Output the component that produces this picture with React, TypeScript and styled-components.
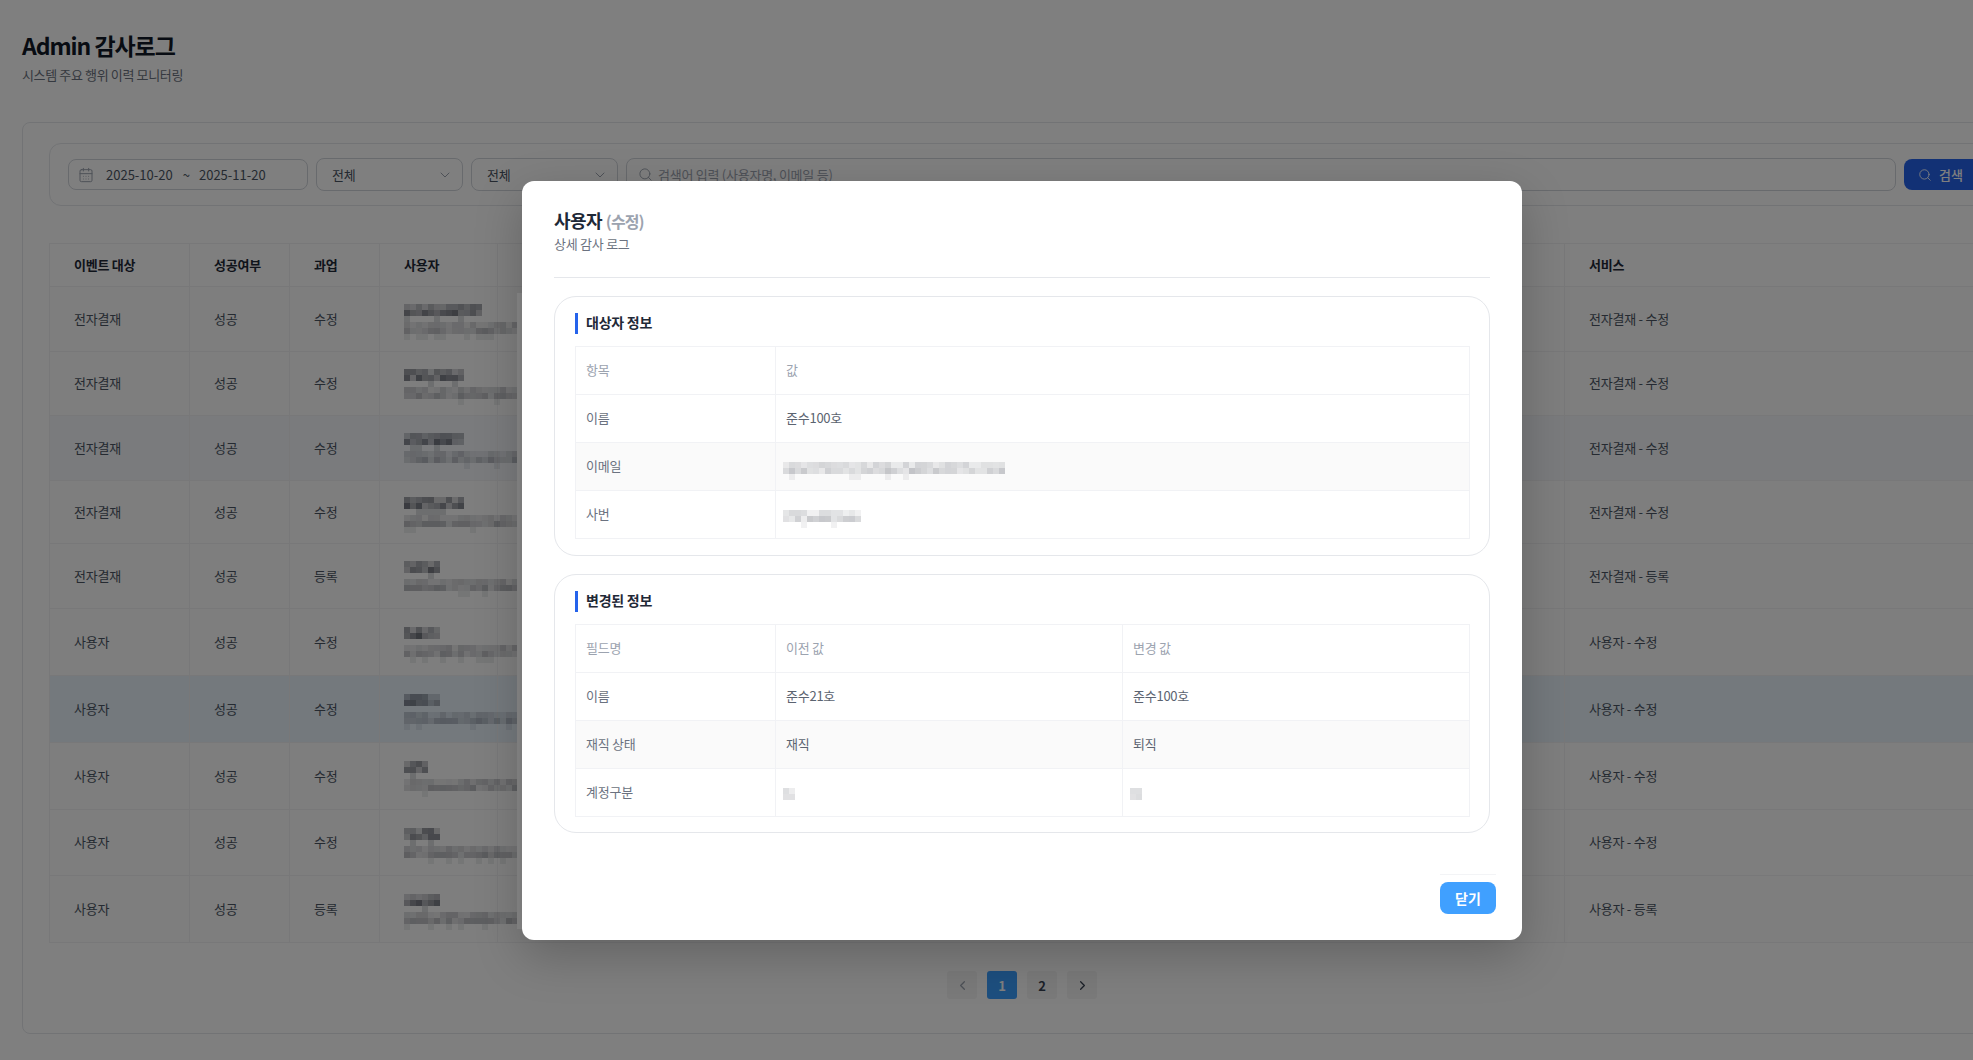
import styled, { createGlobalStyle } from 'styled-components';
import { CalendarDays, ChevronDown, ChevronLeft, ChevronRight, Search } from 'lucide-react';

const GlobalStyle = createGlobalStyle`
  html, body {
    margin: 0;
    padding: 0;
    background: #fff;
    overflow: hidden;
    font-family: "Noto Sans CJK KR", "Noto Sans", sans-serif;
    letter-spacing: -0.25px;
  }
  * { box-sizing: border-box; }
`;

const Page = styled.div`
  position: relative;
  width: 1973px;
  height: 1060px;
  overflow: hidden;
  padding: 0 0 0 22px;
  background: #fff;
`;

const PageHead = styled.header`
  height: 122px;
  padding-top: 29px;
`;

const PageTitle = styled.h1`
  margin: 0;
  font-size: 23px;
  line-height: 32px;
  font-weight: 700;
  letter-spacing: -1.05px;
  color: #111827;
`;

const PageSub = styled.p`
  margin: 4px 0 0;
  font-size: 13px;
  line-height: 20px;
  letter-spacing: -0.36px;
  color: #6b7280;
`;

const Panel = styled.section`
  width: 2100px;
  height: 912px;
  padding: 20px 26px;
  border: 1px solid #e5e7eb;
  border-radius: 8px;
`;

const FilterBar = styled.div`
  display: flex;
  align-items: center;
  gap: 8px;
  height: 63px;
  width: 2040px;
  padding: 0 18px;
  border: 1px solid #e5e7eb;
  border-radius: 12px;
`;

const DateField = styled.div`
  display: flex;
  align-items: center;
  width: 240px;
  height: 31px;
  padding-left: 9px;
  border: 1px solid #d1d5db;
  border-radius: 8px;
  font-size: 13px;
  letter-spacing: 0;
  color: #4b5563;
  svg { color: #9ca3af; margin-right: 12px; }
`;

const Tilde = styled.span`
  margin: 0 9px 0 10px;
`;

const SelectField = styled.div`
  display: flex;
  align-items: center;
  justify-content: space-between;
  width: ${p => p.$w}px;
  height: 33px;
  padding: 0 9px 0 15px;
  border: 1px solid #d1d5db;
  border-radius: 8px;
  font-size: 13px;
  color: #4b5563;
  svg { color: #9ca3af; }
`;

const SearchField = styled.div`
  display: flex;
  align-items: center;
  gap: 5px;
  width: 1270px;
  height: 33px;
  padding-left: 11px;
  border: 1px solid #d1d5db;
  border-radius: 8px;
  font-size: 13px;
  color: #9ca3af;
`;

const SearchButton = styled.button`
  display: flex;
  align-items: center;
  gap: 7px;
  width: 100px;
  height: 31px;
  padding: 0 0 0 14px;
  border: 0;
  border-radius: 8px;
  background: #2563eb;
  color: #fff;
  font: 500 13px "Noto Sans CJK KR", "Noto Sans", sans-serif;
`;

const LogTable = styled.table`
  width: 2040px;
  margin-top: 37px;
  border-collapse: collapse;
  table-layout: fixed;
  font-size: 13px;
  color: #4b5563;
  th, td {
    padding: 0 0 2px 24px;
    border: 1px solid #f0f0f2;
    text-align: left;
  }
  th {
    height: 43px;
    font-weight: 700;
    color: #1f2937;
  }
`;

const LogRow = styled.tr`
  height: ${p => p.$h}px;
  background: ${p => p.$bg};
`;

const UserCell = styled.div`
  display: flex;
  flex-direction: column;
  padding-top: 8px;
  svg { display: block; }
`;

const Pager = styled.nav`
  display: flex;
  justify-content: center;
  gap: 10px;
  width: 150px;
  margin: 28px 0 0 898px;
`;

const PageBtn = styled.button`
  display: flex;
  align-items: center;
  justify-content: center;
  flex: none;
  width: 30px;
  height: 28px;
  padding: 0;
  border: 0;
  border-radius: 3px;
  background: ${p => (p.$active ? '#3b9eff' : '#f5f5f5')};
  color: ${p => (p.$active ? '#fff' : p.$off ? '#9ca3af' : '#374151')};
  font: 600 13px "Noto Sans CJK KR", "Noto Sans", sans-serif;
`;

const Backdrop = styled.div`
  position: absolute;
  inset: 0;
  background: rgba(0, 0, 0, 0.5);
`;

const Strip = styled.div`
  position: absolute;
  left: 517px;
  top: 293px;
  width: 6px;
  height: 636px;
  background: #8a8a8a;
`;

const Modal = styled.div`
  position: absolute;
  left: 522px;
  top: 181px;
  width: 1000px;
  height: 759px;
  padding: 27px 32px 0;
  border-radius: 12px;
  background: #fff;
  box-shadow: 0 16px 48px rgba(0, 0, 0, 0.22);
`;

const ModalHead = styled.div`
  height: 70px;
  border-bottom: 1px solid #e5e7eb;
`;

const ModalTitle = styled.h2`
  margin: 0;
  font-size: 18px;
  line-height: 25px;
  font-weight: 700;
  letter-spacing: -0.5px;
  color: #1f2937;
`;

const ModalTitleNote = styled.span`
  font-size: 16px;
  font-weight: 600;
  letter-spacing: -0.9px;
  color: #9ca3af;
`;

const ModalSub = styled.p`
  margin: 0;
  font-size: 13px;
  line-height: 20px;
  color: #6b7280;
`;

const Card = styled.section`
  height: ${p => p.$h}px;
  margin-top: 18px;
  padding: 16px 20px;
  border: 1px solid #e5e7eb;
  border-radius: 22px;
`;

const CardTitle = styled.h3`
  margin: 0 0 12px;
  padding: 0 0 2px 8px;
  border-left: 3px solid #2563eb;
  font-size: 14px;
  line-height: 19px;
  font-weight: 700;
  color: #1f2937;
`;

const InfoTable = styled.table`
  width: 894px;
  border-collapse: collapse;
  table-layout: fixed;
  font-size: 13px;
  border: 1px solid #e8eaf0;
  td {
    height: 48px;
    padding: 0 0 2px 10px;
    border: 1px solid #f1f2f5;
  }
`;

const InfoRow = styled.tr`
  background: ${p => (p.$alt ? '#fafafa' : '#fff')};
  color: ${p => (p.$head ? '#9ca3af' : '#5b6370')};
`;

const Label = styled.td`
  color: ${p => (p.$head ? '#9ca3af' : '#6b7280')};
`;

const BlurCell = styled.div`
  margin-left: -3px;
  padding-top: 10px;
  svg { display: block; }
`;

const Footer = styled.div`
  display: flex;
  justify-content: flex-end;
  margin: 41px -6px 0 0;
`;

const CloseWrap = styled.div`
  width: 56px;
  padding-top: 7px;
  border-top: 1px solid #f3f4f6;
`;

const CloseButton = styled.button`
  display: block;
  width: 56px;
  height: 32px;
  padding: 0;
  border: 0;
  border-radius: 8px;
  background: #40a0ff;
  color: #fff;
  font: 700 14px "Noto Sans CJK KR", "Noto Sans", sans-serif;
`;

// 가려진 개인정보용 모자이크
const Mosaic = ({ cols, seed, min, max }: { cols: number; seed: number; min: number; max: number }) => {
  let s = seed * 7919 + 13;
  const rnd = () => {
    s = (s * 16807) % 2147483647;
    return (s % 1000) / 1000;
  };
  const cells: { x: number; y: number; a: number }[] = [];
  for (let y = 0; y < 3; y++) {
    for (let x = 0; x < cols; x++) {
      const r = rnd();
      if (y === 2) {
        if (r < 0.82) continue;
        cells.push({ x, y, a: min * 0.7 });
      } else {
        const shade = y === 0 ? 0.75 : 1;
        cells.push({ x, y, a: (min + (max - min) * rnd()) * shade });
      }
    }
  }
  return (
    <svg width={cols * 6} height={18} viewBox={`0 0 ${cols * 6} 18`}>
      {cells.map((c, i) => (
        <rect key={i} x={c.x * 6} y={c.y * 6} width={6} height={6} fill={`rgba(20,25,40,${c.a.toFixed(2)})`} />
      ))}
    </svg>
  );
};

const rows = [
  { target: '전자결재', job: '수정', h: 65, bg: '#fcfcfc', name: 13 },
  { target: '전자결재', job: '수정', h: 64, bg: '#fcfcfc', name: 10 },
  { target: '전자결재', job: '수정', h: 65, bg: '#f4f7fb', name: 10 },
  { target: '전자결재', job: '수정', h: 63, bg: '#fcfcfc', name: 10 },
  { target: '전자결재', job: '등록', h: 65, bg: '#fcfcfc', name: 6 },
  { target: '사용자', job: '수정', h: 67, bg: '#fcfcfc', name: 6 },
  { target: '사용자', job: '수정', h: 67, bg: '#e8f2fb', name: 6 },
  { target: '사용자', job: '수정', h: 67, bg: '#fcfcfc', name: 4 },
  { target: '사용자', job: '수정', h: 66, bg: '#fcfcfc', name: 6 },
  { target: '사용자', job: '등록', h: 67, bg: '#fcfcfc', name: 6 },
];

const App = () => {
  return (
    <Page>
      <GlobalStyle />
      <PageHead>
        <PageTitle>Admin 감사로그</PageTitle>
        <PageSub>시스템 주요 행위 이력 모니터링</PageSub>
      </PageHead>

      <Panel>
        <FilterBar>
          <DateField>
            <CalendarDays size={16} strokeWidth={1.5} />
            2025-10-20<Tilde>~</Tilde>2025-11-20
          </DateField>
          <SelectField $w={147}>
            전체
            <ChevronDown size={16} strokeWidth={1.5} />
          </SelectField>
          <SelectField $w={147}>
            전체
            <ChevronDown size={16} strokeWidth={1.5} />
          </SelectField>
          <SearchField>
            <Search size={15} strokeWidth={1.5} />
            검색어 입력 (사용자명, 이메일 등)
          </SearchField>
          <SearchButton>
            <Search size={14} strokeWidth={1.5} />
            검색
          </SearchButton>
        </FilterBar>

        <LogTable>
          <colgroup>
            <col width={140} />
            <col width={100} />
            <col width={90} />
            <col width={118} />
            <col width={1067} />
            <col width={525} />
          </colgroup>
          <thead>
            <tr>
              <th>이벤트 대상</th>
              <th>성공여부</th>
              <th>과업</th>
              <th>사용자</th>
              <th />
              <th>서비스</th>
            </tr>
          </thead>
          <tbody>
            {rows.map((r, i) => (
              <LogRow key={i} $h={r.h} $bg={r.bg}>
                <td>{r.target}</td>
                <td>성공</td>
                <td>{r.job}</td>
                <td>
                  <UserCell>
                    <Mosaic cols={r.name} seed={i + 3} min={0.2} max={0.6} />
                    <Mosaic cols={19} seed={i + 41} min={0.1} max={0.3} />
                  </UserCell>
                </td>
                <td />
                <td>
                  {r.target} - {r.job}
                </td>
              </LogRow>
            ))}
          </tbody>
        </LogTable>

        <Pager>
          <PageBtn $off>
            <ChevronLeft size={15} />
          </PageBtn>
          <PageBtn $active>1</PageBtn>
          <PageBtn>2</PageBtn>
          <PageBtn>
            <ChevronRight size={15} />
          </PageBtn>
        </Pager>
      </Panel>

      <Backdrop />
      <Strip />

      <Modal>
        <ModalHead>
          <ModalTitle>
            사용자 <ModalTitleNote>(수정)</ModalTitleNote>
          </ModalTitle>
          <ModalSub>상세 감사 로그</ModalSub>
        </ModalHead>

        <Card $h={260}>
          <CardTitle>대상자 정보</CardTitle>
          <InfoTable>
            <colgroup>
              <col width={200} />
              <col width={694} />
            </colgroup>
            <tbody>
              <InfoRow $head>
                <Label $head>항목</Label>
                <td>값</td>
              </InfoRow>
              <InfoRow>
                <Label>이름</Label>
                <td>준수100호</td>
              </InfoRow>
              <InfoRow $alt>
                <Label>이메일</Label>
                <td>
                  <BlurCell>
                    <Mosaic cols={37} seed={5} min={0.08} max={0.24} />
                  </BlurCell>
                </td>
              </InfoRow>
              <InfoRow>
                <Label>사번</Label>
                <td>
                  <BlurCell>
                    <Mosaic cols={13} seed={9} min={0.08} max={0.24} />
                  </BlurCell>
                </td>
              </InfoRow>
            </tbody>
          </InfoTable>
        </Card>

        <Card $h={259}>
          <CardTitle>변경된 정보</CardTitle>
          <InfoTable>
            <colgroup>
              <col width={200} />
              <col width={347} />
              <col width={347} />
            </colgroup>
            <tbody>
              <InfoRow $head>
                <Label $head>필드명</Label>
                <td>이전 값</td>
                <td>변경 값</td>
              </InfoRow>
              <InfoRow>
                <Label>이름</Label>
                <td>준수21호</td>
                <td>준수100호</td>
              </InfoRow>
              <InfoRow $alt>
                <Label>재직 상태</Label>
                <td>재직</td>
                <td>퇴직</td>
              </InfoRow>
              <InfoRow>
                <Label>계정구분</Label>
                <td>
                  <BlurCell>
                    <Mosaic cols={2} seed={2} min={0.08} max={0.2} />
                  </BlurCell>
                </td>
                <td>
                  <BlurCell>
                    <Mosaic cols={2} seed={4} min={0.06} max={0.2} />
                  </BlurCell>
                </td>
              </InfoRow>
            </tbody>
          </InfoTable>
        </Card>

        <Footer>
          <CloseWrap>
            <CloseButton>닫기</CloseButton>
          </CloseWrap>
        </Footer>
      </Modal>
    </Page>
  );
};

export default App;
